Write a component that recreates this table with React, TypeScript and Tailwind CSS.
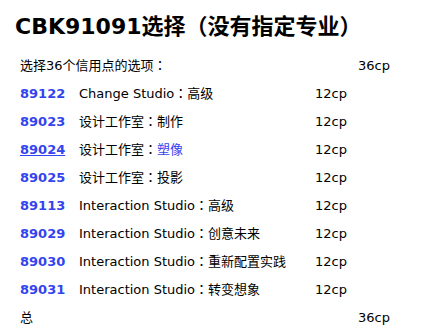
import React from 'react';

const rows = [
  { code: '89122', title: 'Change Studio：高级', cp: '12cp' },
  { code: '89023', title: '设计工作室：制作', cp: '12cp' },
  { code: '89024', title: '设计工作室：', link: '塑像', cp: '12cp', active: true },
  { code: '89025', title: '设计工作室：投影', cp: '12cp' },
  { code: '89113', title: 'Interaction Studio：高级', cp: '12cp' },
  { code: '89029', title: 'Interaction Studio：创意未来', cp: '12cp' },
  { code: '89030', title: 'Interaction Studio：重新配置实践', cp: '12cp' },
  { code: '89031', title: 'Interaction Studio：转变想象', cp: '12cp' },
];

const App: React.FC = () => {
  return (
    <div className="w-[429px] h-[333px] bg-white text-black overflow-hidden font-['DejaVu_Sans','Noto_Sans_CJK_TC',sans-serif]">
      <h1 className="pl-[15px] pt-[13px] text-[22px] leading-[28px] font-bold">
        CBK91091选择（没有指定专业）
      </h1>

      <div className="pl-[20px] pt-[15px] text-[13px]">
        <div className="flex h-[28px] items-start">
          <span className="w-[338px]">选择36个信用点的选项：</span>
          <span>36cp</span>
        </div>

        {rows.map((r) => (
          <div key={r.code} className="flex h-[28px] items-start">
            <span
              className={
                'w-[59px] font-bold text-[#3344ee] ' + (r.active ? 'underline' : '')
              }
            >
              {r.code}
            </span>
            <span className="w-[236px]">
              {r.title}
              {r.link && <span className="text-[#3344ee]">{r.link}</span>}
            </span>
            <span>{r.cp}</span>
          </div>
        ))}

        <div className="flex h-[28px] items-start">
          <span className="w-[338px]">总</span>
          <span>36cp</span>
        </div>
      </div>
    </div>
  );
};

export default App;
